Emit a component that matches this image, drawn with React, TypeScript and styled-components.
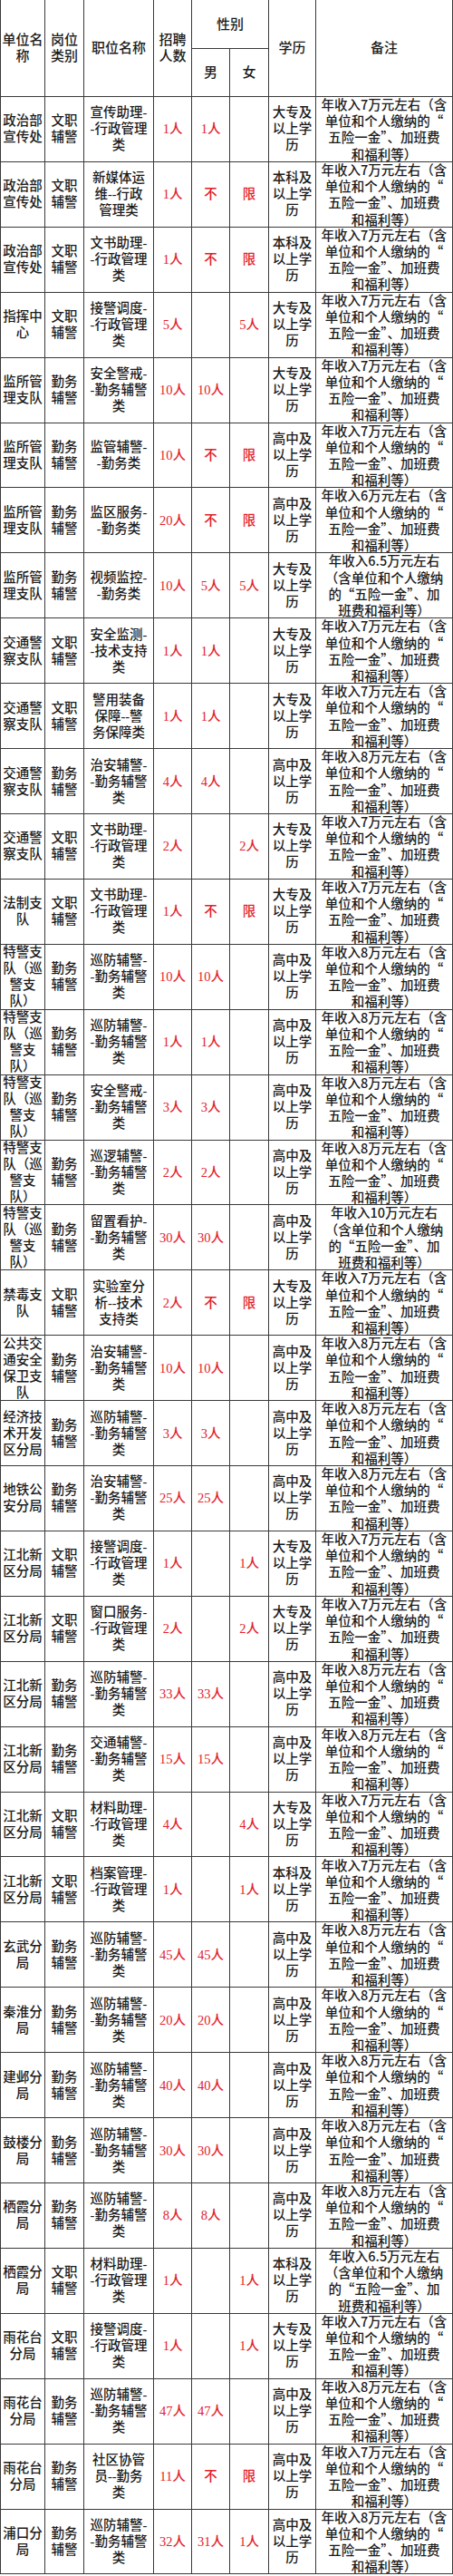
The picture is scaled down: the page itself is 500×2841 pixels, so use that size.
import styled, { createGlobalStyle } from "styled-components";

interface Post {
  unit: string;
  kind: string;
  title: string;
  total: string;
  male: string;
  female: string;
  edu: string;
  note: string;
}

const GlobalStyle = createGlobalStyle`
  html, body {
    margin: 0;
    padding: 0;
    background: #ffffff;
  }
  body {
    font-family: "Liberation Serif", "Noto Sans CJK SC", serif;
    color: #1b1b1b;
  }
`;

const LINE = "#3a3a3a";

const Table = styled.div`
  display: grid;
  grid-template-columns: 50px 43px 77px 42px 42px 43px 52px 151px;
  grid-template-rows: 54px 53px;
  grid-auto-rows: 71.92px;
  width: 500px;
`;

const Cell = styled.div<{ $first?: boolean }>`
  box-sizing: border-box;
  display: flex;
  align-items: center;
  justify-content: center;
  text-align: center;
  white-space: pre;
  font-size: 14.5px;
  line-height: 18px;
  font-weight: 500;
  border-right: 1px solid ${LINE};
  border-bottom: 1px solid ${LINE};
  border-left: ${(p) => (p.$first ? `1px solid ${LINE}` : "none")};
`;

const HeadCell = styled(Cell)<{ $rows?: number; $cols?: number }>`
  grid-row: span ${(p) => p.$rows ?? 1};
  grid-column: span ${(p) => p.$cols ?? 1};
  font-size: 15px;
`;

const Count = styled(Cell)`
  color: #e3212b;
`;

const Note = styled(Cell)`
  font-family: "Noto Sans CJK SC", "Liberation Serif", sans-serif;
  line-height: 18.2px;
`;

const DZ = "大专及\n以上学\n历";
const BK = "本科及\n以上学\n历";
const GZ = "高中及\n以上学\n历";

const pay = (n: string) => `年收入${n}万元左右（含\n单位和个人缴纳的“\n五险一金”、加班费\n和福利等）`;
const payLong = (n: string) => `年收入${n}万元左右\n（含单位和个人缴纳\n的“五险一金”、加\n班费和福利等）`;

const WZ = "文职\n辅警";
const QW = "勤务\n辅警";
const XC = "政治部\n宣传处";
const JS = "监所管\n理支队";
const JT = "交通警\n察支队";
const TJ = "特警支\n队（巡\n警支\n队）";
const JB = "江北新\n区分局";
const YH = "雨花台\n分局";

const XZ = (a: string) => `${a}-\n-行政管理\n类`;
const QF = (a: string) => `${a}-\n-勤务辅警\n类`;

const posts: Post[] = [
  { unit: XC, kind: WZ, title: XZ("宣传助理"), total: "1人", male: "1人", female: "", edu: DZ, note: pay("7") },
  { unit: XC, kind: WZ, title: "新媒体运\n维--行政\n管理类", total: "1人", male: "不", female: "限", edu: BK, note: pay("7") },
  { unit: XC, kind: WZ, title: XZ("文书助理"), total: "1人", male: "不", female: "限", edu: BK, note: pay("7") },
  { unit: "指挥中\n心", kind: WZ, title: XZ("接警调度"), total: "5人", male: "", female: "5人", edu: DZ, note: pay("7") },
  { unit: JS, kind: QW, title: QF("安全警戒"), total: "10人", male: "10人", female: "", edu: DZ, note: pay("7") },
  { unit: JS, kind: QW, title: "监管辅警-\n-勤务类", total: "10人", male: "不", female: "限", edu: GZ, note: pay("7") },
  { unit: JS, kind: QW, title: "监区服务-\n-勤务类", total: "20人", male: "不", female: "限", edu: GZ, note: pay("6") },
  { unit: JS, kind: QW, title: "视频监控-\n-勤务类", total: "10人", male: "5人", female: "5人", edu: DZ, note: payLong("6.5") },
  { unit: JT, kind: WZ, title: "安全监测-\n-技术支持\n类", total: "1人", male: "1人", female: "", edu: DZ, note: pay("7") },
  { unit: JT, kind: WZ, title: "警用装备\n保障--警\n务保障类", total: "1人", male: "1人", female: "", edu: DZ, note: pay("7") },
  { unit: JT, kind: QW, title: QF("治安辅警"), total: "4人", male: "4人", female: "", edu: GZ, note: pay("8") },
  { unit: JT, kind: WZ, title: XZ("文书助理"), total: "2人", male: "", female: "2人", edu: DZ, note: pay("7") },
  { unit: "法制支\n队", kind: WZ, title: XZ("文书助理"), total: "1人", male: "不", female: "限", edu: DZ, note: pay("7") },
  { unit: TJ, kind: QW, title: QF("巡防辅警"), total: "10人", male: "10人", female: "", edu: GZ, note: pay("8") },
  { unit: TJ, kind: QW, title: QF("巡防辅警"), total: "1人", male: "1人", female: "", edu: GZ, note: pay("8") },
  { unit: TJ, kind: QW, title: QF("安全警戒"), total: "3人", male: "3人", female: "", edu: GZ, note: pay("8") },
  { unit: TJ, kind: QW, title: QF("巡逻辅警"), total: "2人", male: "2人", female: "", edu: GZ, note: pay("8") },
  { unit: TJ, kind: QW, title: QF("留置看护"), total: "30人", male: "30人", female: "", edu: GZ, note: payLong("10") },
  { unit: "禁毒支\n队", kind: WZ, title: "实验室分\n析--技术\n支持类", total: "2人", male: "不", female: "限", edu: DZ, note: pay("7") },
  { unit: "公共交\n通安全\n保卫支\n队", kind: QW, title: QF("治安辅警"), total: "10人", male: "10人", female: "", edu: GZ, note: pay("8") },
  { unit: "经济技\n术开发\n区分局", kind: QW, title: QF("巡防辅警"), total: "3人", male: "3人", female: "", edu: GZ, note: pay("8") },
  { unit: "地铁公\n安分局", kind: QW, title: QF("治安辅警"), total: "25人", male: "25人", female: "", edu: GZ, note: pay("8") },
  { unit: JB, kind: WZ, title: XZ("接警调度"), total: "1人", male: "", female: "1人", edu: DZ, note: pay("7") },
  { unit: JB, kind: WZ, title: XZ("窗口服务"), total: "2人", male: "", female: "2人", edu: DZ, note: pay("7") },
  { unit: JB, kind: QW, title: QF("巡防辅警"), total: "33人", male: "33人", female: "", edu: GZ, note: pay("8") },
  { unit: JB, kind: QW, title: QF("交通辅警"), total: "15人", male: "15人", female: "", edu: GZ, note: pay("8") },
  { unit: JB, kind: WZ, title: XZ("材料助理"), total: "4人", male: "", female: "4人", edu: DZ, note: pay("7") },
  { unit: JB, kind: WZ, title: XZ("档案管理"), total: "1人", male: "", female: "1人", edu: BK, note: pay("7") },
  { unit: "玄武分\n局", kind: QW, title: QF("巡防辅警"), total: "45人", male: "45人", female: "", edu: GZ, note: pay("8") },
  { unit: "秦淮分\n局", kind: QW, title: QF("巡防辅警"), total: "20人", male: "20人", female: "", edu: GZ, note: pay("8") },
  { unit: "建邺分\n局", kind: QW, title: QF("巡防辅警"), total: "40人", male: "40人", female: "", edu: GZ, note: pay("8") },
  { unit: "鼓楼分\n局", kind: QW, title: QF("巡防辅警"), total: "30人", male: "30人", female: "", edu: GZ, note: pay("8") },
  { unit: "栖霞分\n局", kind: QW, title: QF("巡防辅警"), total: "8人", male: "8人", female: "", edu: GZ, note: pay("8") },
  { unit: "栖霞分\n局", kind: WZ, title: XZ("材料助理"), total: "1人", male: "", female: "1人", edu: BK, note: payLong("6.5") },
  { unit: YH, kind: WZ, title: XZ("接警调度"), total: "1人", male: "", female: "1人", edu: DZ, note: pay("7") },
  { unit: YH, kind: QW, title: QF("巡防辅警"), total: "47人", male: "47人", female: "", edu: GZ, note: pay("8") },
  { unit: YH, kind: QW, title: "社区协管\n员--勤务\n类", total: "11人", male: "不", female: "限", edu: GZ, note: pay("7") },
  { unit: "浦口分\n局", kind: QW, title: QF("巡防辅警"), total: "32人", male: "31人", female: "1人", edu: GZ, note: pay("8") },
];

const Row = ({ post }: { post: Post }) => (
  <>
    <Cell $first>{post.unit}</Cell>
    <Cell>{post.kind}</Cell>
    <Cell>{post.title}</Cell>
    <Count>{post.total}</Count>
    <Count>{post.male}</Count>
    <Count>{post.female}</Count>
    <Cell>{post.edu}</Cell>
    <Note>{post.note}</Note>
  </>
);

export default function App() {
  return (
    <>
      <GlobalStyle />
      <Table>
        <HeadCell $first $rows={2}>{"单位名\n称"}</HeadCell>
        <HeadCell $rows={2}>{"岗位\n类别"}</HeadCell>
        <HeadCell $rows={2}>职位名称</HeadCell>
        <HeadCell $rows={2}>{"招聘\n人数"}</HeadCell>
        <HeadCell $cols={2}>性别</HeadCell>
        <HeadCell $rows={2}>学历</HeadCell>
        <HeadCell $rows={2}>备注</HeadCell>
        <HeadCell>男</HeadCell>
        <HeadCell>女</HeadCell>
        {posts.map((p, i) => (
          <Row key={i} post={p} />
        ))}
      </Table>
    </>
  );
}
